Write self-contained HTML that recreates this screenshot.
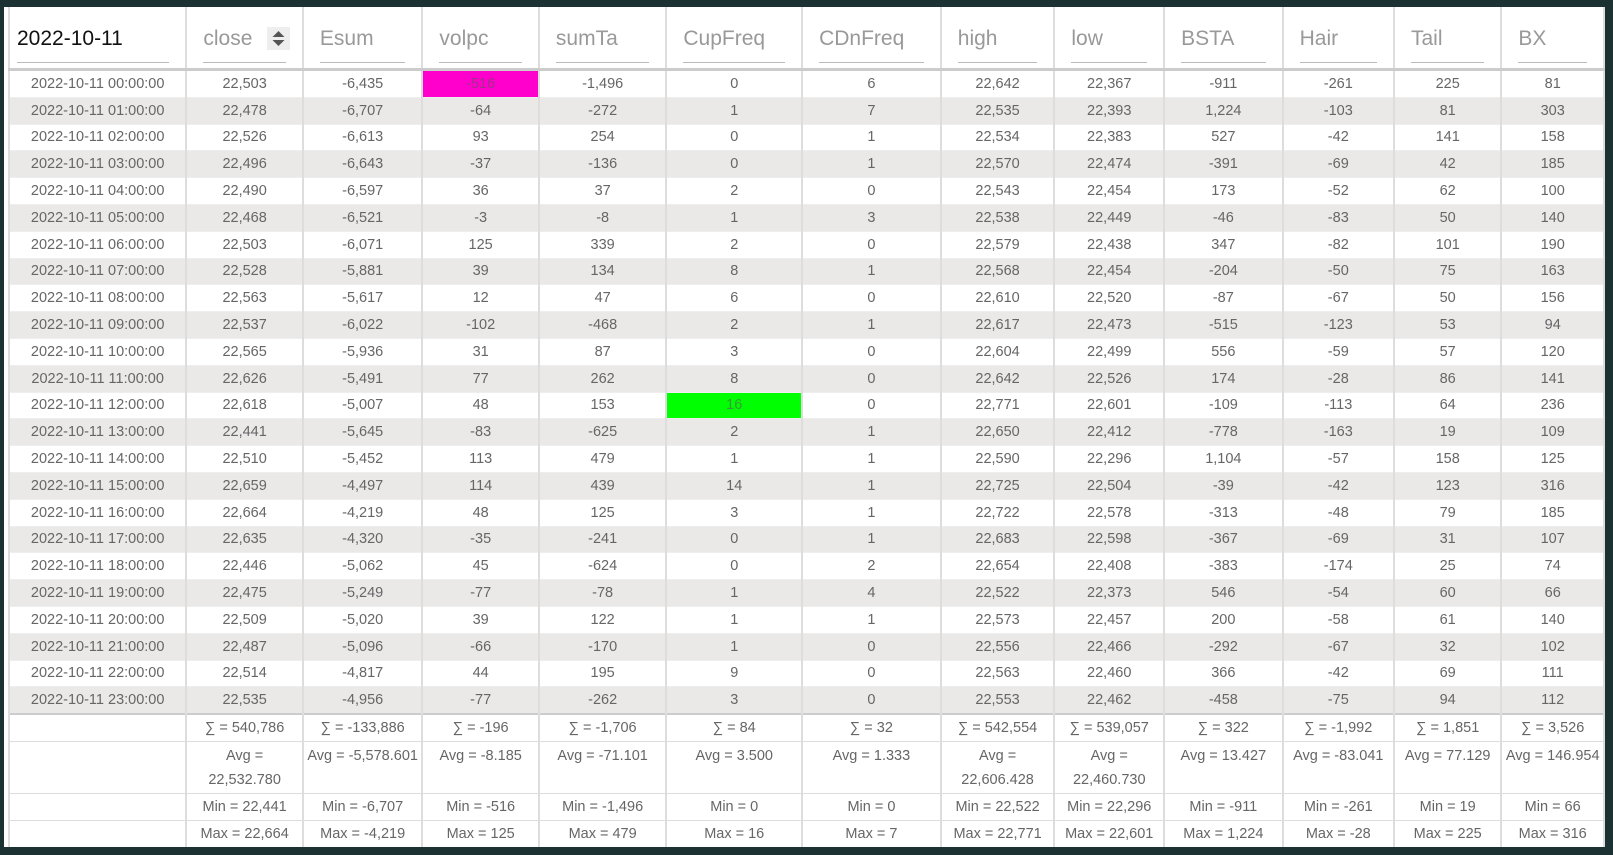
<!DOCTYPE html>
<html><head><meta charset="utf-8"><style>
html,body{margin:0;padding:0;background:#1c3232;width:1613px;height:855px;overflow:hidden}
.wrap{position:absolute;left:4px;top:7px;width:1601px;height:840px;background:#fff;overflow:hidden}
table{border-collapse:collapse;table-layout:fixed;font-family:"Liberation Sans",sans-serif;position:absolute;left:4px;top:0}
td,th{border-left:2px solid #ddd;border-right:2px solid #ddd;padding:0;text-align:center;color:#666;font-size:14.5px;white-space:nowrap;overflow:hidden}
th{height:61px;border-bottom:3px solid #ccc;font-weight:normal;font-size:21px;color:#999;text-align:left;vertical-align:top;position:relative}
th span{display:block;margin:20px 16px 0 16px;padding-bottom:9px;border-bottom:1px solid #bbb;height:26px}
th.first span{color:#111;margin-left:7px}
tbody td{height:25.8px;border-bottom:1px solid #eee}
tbody tr:nth-child(even) td{background:#ebe8e8}
tfoot td{height:25.8px;border-top:1px solid #ddd;border-bottom:1px solid #ddd}
tfoot tr.sum td{border-top:2px solid #ccc}
tfoot tr.avg td{height:49px;vertical-align:top;padding-top:2px;line-height:24px;white-space:normal}
.mg{background:#ff00cc!important;color:#a0308a}
.gr{background:#00ff00!important;color:#3a9a3a}
.sort{position:absolute;left:80px;top:20px;width:23px;height:23px;background:#eee}
</style></head><body>
<div class="wrap">
<table>
<colgroup><col style="width:178px"><col style="width:117px"><col style="width:120px"><col style="width:117px"><col style="width:128px"><col style="width:136px"><col style="width:139px"><col style="width:114px"><col style="width:110px"><col style="width:119px"><col style="width:112px"><col style="width:108px"><col style="width:103px"></colgroup>
<thead><tr><th class="first"><span>2022-10-11</span></th><th><span>close</span><div class="sort"><svg width="23" height="23" viewBox="0 0 23 23"><path d="M11.5 4l6 6h-12z M11.5 19l6-6h-12z" fill="#555"/></svg></div></th><th><span>Esum</span></th><th><span>volpc</span></th><th><span>sumTa</span></th><th><span>CupFreq</span></th><th><span>CDnFreq</span></th><th><span>high</span></th><th><span>low</span></th><th><span>BSTA</span></th><th><span>Hair</span></th><th><span>Tail</span></th><th><span>BX</span></th></tr></thead>
<tbody>
<tr><td>2022-10-11 00:00:00</td><td>22,503</td><td>-6,435</td><td class="mg">-516</td><td>-1,496</td><td>0</td><td>6</td><td>22,642</td><td>22,367</td><td>-911</td><td>-261</td><td>225</td><td>81</td></tr>
<tr><td>2022-10-11 01:00:00</td><td>22,478</td><td>-6,707</td><td>-64</td><td>-272</td><td>1</td><td>7</td><td>22,535</td><td>22,393</td><td>1,224</td><td>-103</td><td>81</td><td>303</td></tr>
<tr><td>2022-10-11 02:00:00</td><td>22,526</td><td>-6,613</td><td>93</td><td>254</td><td>0</td><td>1</td><td>22,534</td><td>22,383</td><td>527</td><td>-42</td><td>141</td><td>158</td></tr>
<tr><td>2022-10-11 03:00:00</td><td>22,496</td><td>-6,643</td><td>-37</td><td>-136</td><td>0</td><td>1</td><td>22,570</td><td>22,474</td><td>-391</td><td>-69</td><td>42</td><td>185</td></tr>
<tr><td>2022-10-11 04:00:00</td><td>22,490</td><td>-6,597</td><td>36</td><td>37</td><td>2</td><td>0</td><td>22,543</td><td>22,454</td><td>173</td><td>-52</td><td>62</td><td>100</td></tr>
<tr><td>2022-10-11 05:00:00</td><td>22,468</td><td>-6,521</td><td>-3</td><td>-8</td><td>1</td><td>3</td><td>22,538</td><td>22,449</td><td>-46</td><td>-83</td><td>50</td><td>140</td></tr>
<tr><td>2022-10-11 06:00:00</td><td>22,503</td><td>-6,071</td><td>125</td><td>339</td><td>2</td><td>0</td><td>22,579</td><td>22,438</td><td>347</td><td>-82</td><td>101</td><td>190</td></tr>
<tr><td>2022-10-11 07:00:00</td><td>22,528</td><td>-5,881</td><td>39</td><td>134</td><td>8</td><td>1</td><td>22,568</td><td>22,454</td><td>-204</td><td>-50</td><td>75</td><td>163</td></tr>
<tr><td>2022-10-11 08:00:00</td><td>22,563</td><td>-5,617</td><td>12</td><td>47</td><td>6</td><td>0</td><td>22,610</td><td>22,520</td><td>-87</td><td>-67</td><td>50</td><td>156</td></tr>
<tr><td>2022-10-11 09:00:00</td><td>22,537</td><td>-6,022</td><td>-102</td><td>-468</td><td>2</td><td>1</td><td>22,617</td><td>22,473</td><td>-515</td><td>-123</td><td>53</td><td>94</td></tr>
<tr><td>2022-10-11 10:00:00</td><td>22,565</td><td>-5,936</td><td>31</td><td>87</td><td>3</td><td>0</td><td>22,604</td><td>22,499</td><td>556</td><td>-59</td><td>57</td><td>120</td></tr>
<tr><td>2022-10-11 11:00:00</td><td>22,626</td><td>-5,491</td><td>77</td><td>262</td><td>8</td><td>0</td><td>22,642</td><td>22,526</td><td>174</td><td>-28</td><td>86</td><td>141</td></tr>
<tr><td>2022-10-11 12:00:00</td><td>22,618</td><td>-5,007</td><td>48</td><td>153</td><td class="gr">16</td><td>0</td><td>22,771</td><td>22,601</td><td>-109</td><td>-113</td><td>64</td><td>236</td></tr>
<tr><td>2022-10-11 13:00:00</td><td>22,441</td><td>-5,645</td><td>-83</td><td>-625</td><td>2</td><td>1</td><td>22,650</td><td>22,412</td><td>-778</td><td>-163</td><td>19</td><td>109</td></tr>
<tr><td>2022-10-11 14:00:00</td><td>22,510</td><td>-5,452</td><td>113</td><td>479</td><td>1</td><td>1</td><td>22,590</td><td>22,296</td><td>1,104</td><td>-57</td><td>158</td><td>125</td></tr>
<tr><td>2022-10-11 15:00:00</td><td>22,659</td><td>-4,497</td><td>114</td><td>439</td><td>14</td><td>1</td><td>22,725</td><td>22,504</td><td>-39</td><td>-42</td><td>123</td><td>316</td></tr>
<tr><td>2022-10-11 16:00:00</td><td>22,664</td><td>-4,219</td><td>48</td><td>125</td><td>3</td><td>1</td><td>22,722</td><td>22,578</td><td>-313</td><td>-48</td><td>79</td><td>185</td></tr>
<tr><td>2022-10-11 17:00:00</td><td>22,635</td><td>-4,320</td><td>-35</td><td>-241</td><td>0</td><td>1</td><td>22,683</td><td>22,598</td><td>-367</td><td>-69</td><td>31</td><td>107</td></tr>
<tr><td>2022-10-11 18:00:00</td><td>22,446</td><td>-5,062</td><td>45</td><td>-624</td><td>0</td><td>2</td><td>22,654</td><td>22,408</td><td>-383</td><td>-174</td><td>25</td><td>74</td></tr>
<tr><td>2022-10-11 19:00:00</td><td>22,475</td><td>-5,249</td><td>-77</td><td>-78</td><td>1</td><td>4</td><td>22,522</td><td>22,373</td><td>546</td><td>-54</td><td>60</td><td>66</td></tr>
<tr><td>2022-10-11 20:00:00</td><td>22,509</td><td>-5,020</td><td>39</td><td>122</td><td>1</td><td>1</td><td>22,573</td><td>22,457</td><td>200</td><td>-58</td><td>61</td><td>140</td></tr>
<tr><td>2022-10-11 21:00:00</td><td>22,487</td><td>-5,096</td><td>-66</td><td>-170</td><td>1</td><td>0</td><td>22,556</td><td>22,466</td><td>-292</td><td>-67</td><td>32</td><td>102</td></tr>
<tr><td>2022-10-11 22:00:00</td><td>22,514</td><td>-4,817</td><td>44</td><td>195</td><td>9</td><td>0</td><td>22,563</td><td>22,460</td><td>366</td><td>-42</td><td>69</td><td>111</td></tr>
<tr><td>2022-10-11 23:00:00</td><td>22,535</td><td>-4,956</td><td>-77</td><td>-262</td><td>3</td><td>0</td><td>22,553</td><td>22,462</td><td>-458</td><td>-75</td><td>94</td><td>112</td></tr>
</tbody>
<tfoot>
<tr class="sum"><td></td><td>∑ = 540,786</td><td>∑ = -133,886</td><td>∑ = -196</td><td>∑ = -1,706</td><td>∑ = 84</td><td>∑ = 32</td><td>∑ = 542,554</td><td>∑ = 539,057</td><td>∑ = 322</td><td>∑ = -1,992</td><td>∑ = 1,851</td><td>∑ = 3,526</td></tr>
<tr class="avg"><td></td><td>Avg =<br>22,532.780</td><td>Avg = -5,578.601</td><td>Avg = -8.185</td><td>Avg = -71.101</td><td>Avg = 3.500</td><td>Avg = 1.333</td><td>Avg =<br>22,606.428</td><td>Avg =<br>22,460.730</td><td>Avg = 13.427</td><td>Avg = -83.041</td><td>Avg = 77.129</td><td>Avg = 146.954</td></tr>
<tr><td></td><td>Min = 22,441</td><td>Min = -6,707</td><td>Min = -516</td><td>Min = -1,496</td><td>Min = 0</td><td>Min = 0</td><td>Min = 22,522</td><td>Min = 22,296</td><td>Min = -911</td><td>Min = -261</td><td>Min = 19</td><td>Min = 66</td></tr>
<tr><td></td><td>Max = 22,664</td><td>Max = -4,219</td><td>Max = 125</td><td>Max = 479</td><td>Max = 16</td><td>Max = 7</td><td>Max = 22,771</td><td>Max = 22,601</td><td>Max = 1,224</td><td>Max = -28</td><td>Max = 225</td><td>Max = 316</td></tr>
</tfoot>
</table>
</div>
</body></html>
